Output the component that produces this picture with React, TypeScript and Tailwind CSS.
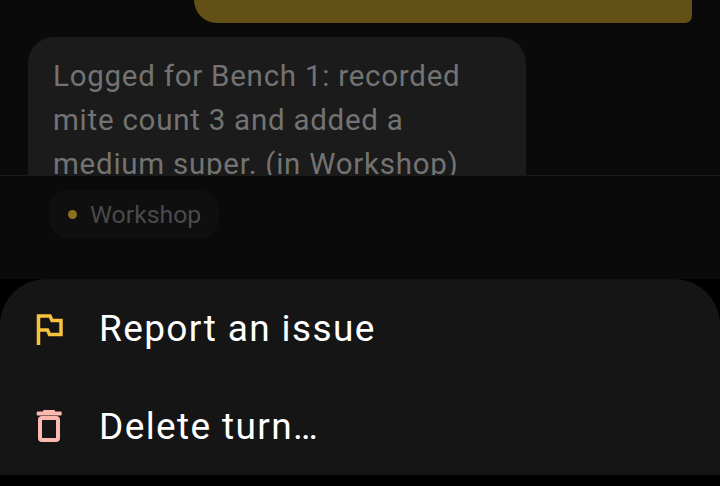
const App = () => {
  return (
    <div className="flex h-[486px] w-[720px] flex-col overflow-hidden bg-black font-['Roboto',sans-serif]">
      {/* Chat behind the scrim */}
      <div className="flex h-[175px] shrink-0 flex-col overflow-hidden bg-[#0a0a0a] px-[28px]">
        <div className="ml-[166px] h-[23px] w-[498px] shrink-0 rounded-bl-[26px] rounded-br-[8px] bg-[#635017]" />
        <div className="mt-[14px] w-[498px] shrink-0 rounded-[26px] bg-[#1b1b1b] px-[25px] py-[17px] text-[29.5px] leading-[44px] tracking-[0.75px] text-[#737373]">
          Logged for Bench 1: recorded mite count 3 and added a medium super. (in Workshop)
        </div>
      </div>

      {/* Chip bar */}
      <div className="h-[104px] shrink-0 border-t border-[#1a1a1a] bg-[#0a0a0a] pl-[49px] pt-[14px]">
        <div className="flex h-[49px] w-[170px] items-center rounded-[20px] bg-[#0f0f0f] pl-[19px]">
          <span className="h-[9px] w-[9px] rounded-full bg-[#8c6f1f]" />
          <span className="ml-[13px] pt-[1px] text-[24.8px] text-[#4a4a4a]">Workshop</span>
        </div>
      </div>

      {/* Bottom sheet */}
      <div className="flex h-[196px] shrink-0 flex-col rounded-t-[46px] bg-[#151515]">
        <div className="flex h-[98px] items-center pl-[36px] pt-[2px]">
          <svg width="28" height="32" viewBox="0 0 28 32" fill="none" stroke="#f7c23c" strokeWidth="3.5">
            <path d="M2.5 32V3H14L16 7.5H25V21.5H13.5L11.5 17H2.5" />
          </svg>
          <span className="ml-[35px] text-[37px] tracking-[1.38px] text-white">Report an issue</span>
        </div>
        <div className="flex h-[98px] items-center pl-[36px] pt-[2px]">
          <svg width="26" height="34" viewBox="0 0 26 34" fill="#fdb9b0">
            <rect x="7" y="0" width="12" height="3" rx="1" />
            <rect x="0.7" y="1.5" width="25" height="4" rx="1" />
            <rect x="4" y="8" width="18" height="22" rx="2" fill="none" stroke="#fdb9b0" strokeWidth="4" />
          </svg>
          <span className="ml-[37px] text-[37px] tracking-[1.38px] text-white">Delete turn…</span>
        </div>
      </div>

      <div className="flex-1 bg-black" />
    </div>
  );
};

export default App;
